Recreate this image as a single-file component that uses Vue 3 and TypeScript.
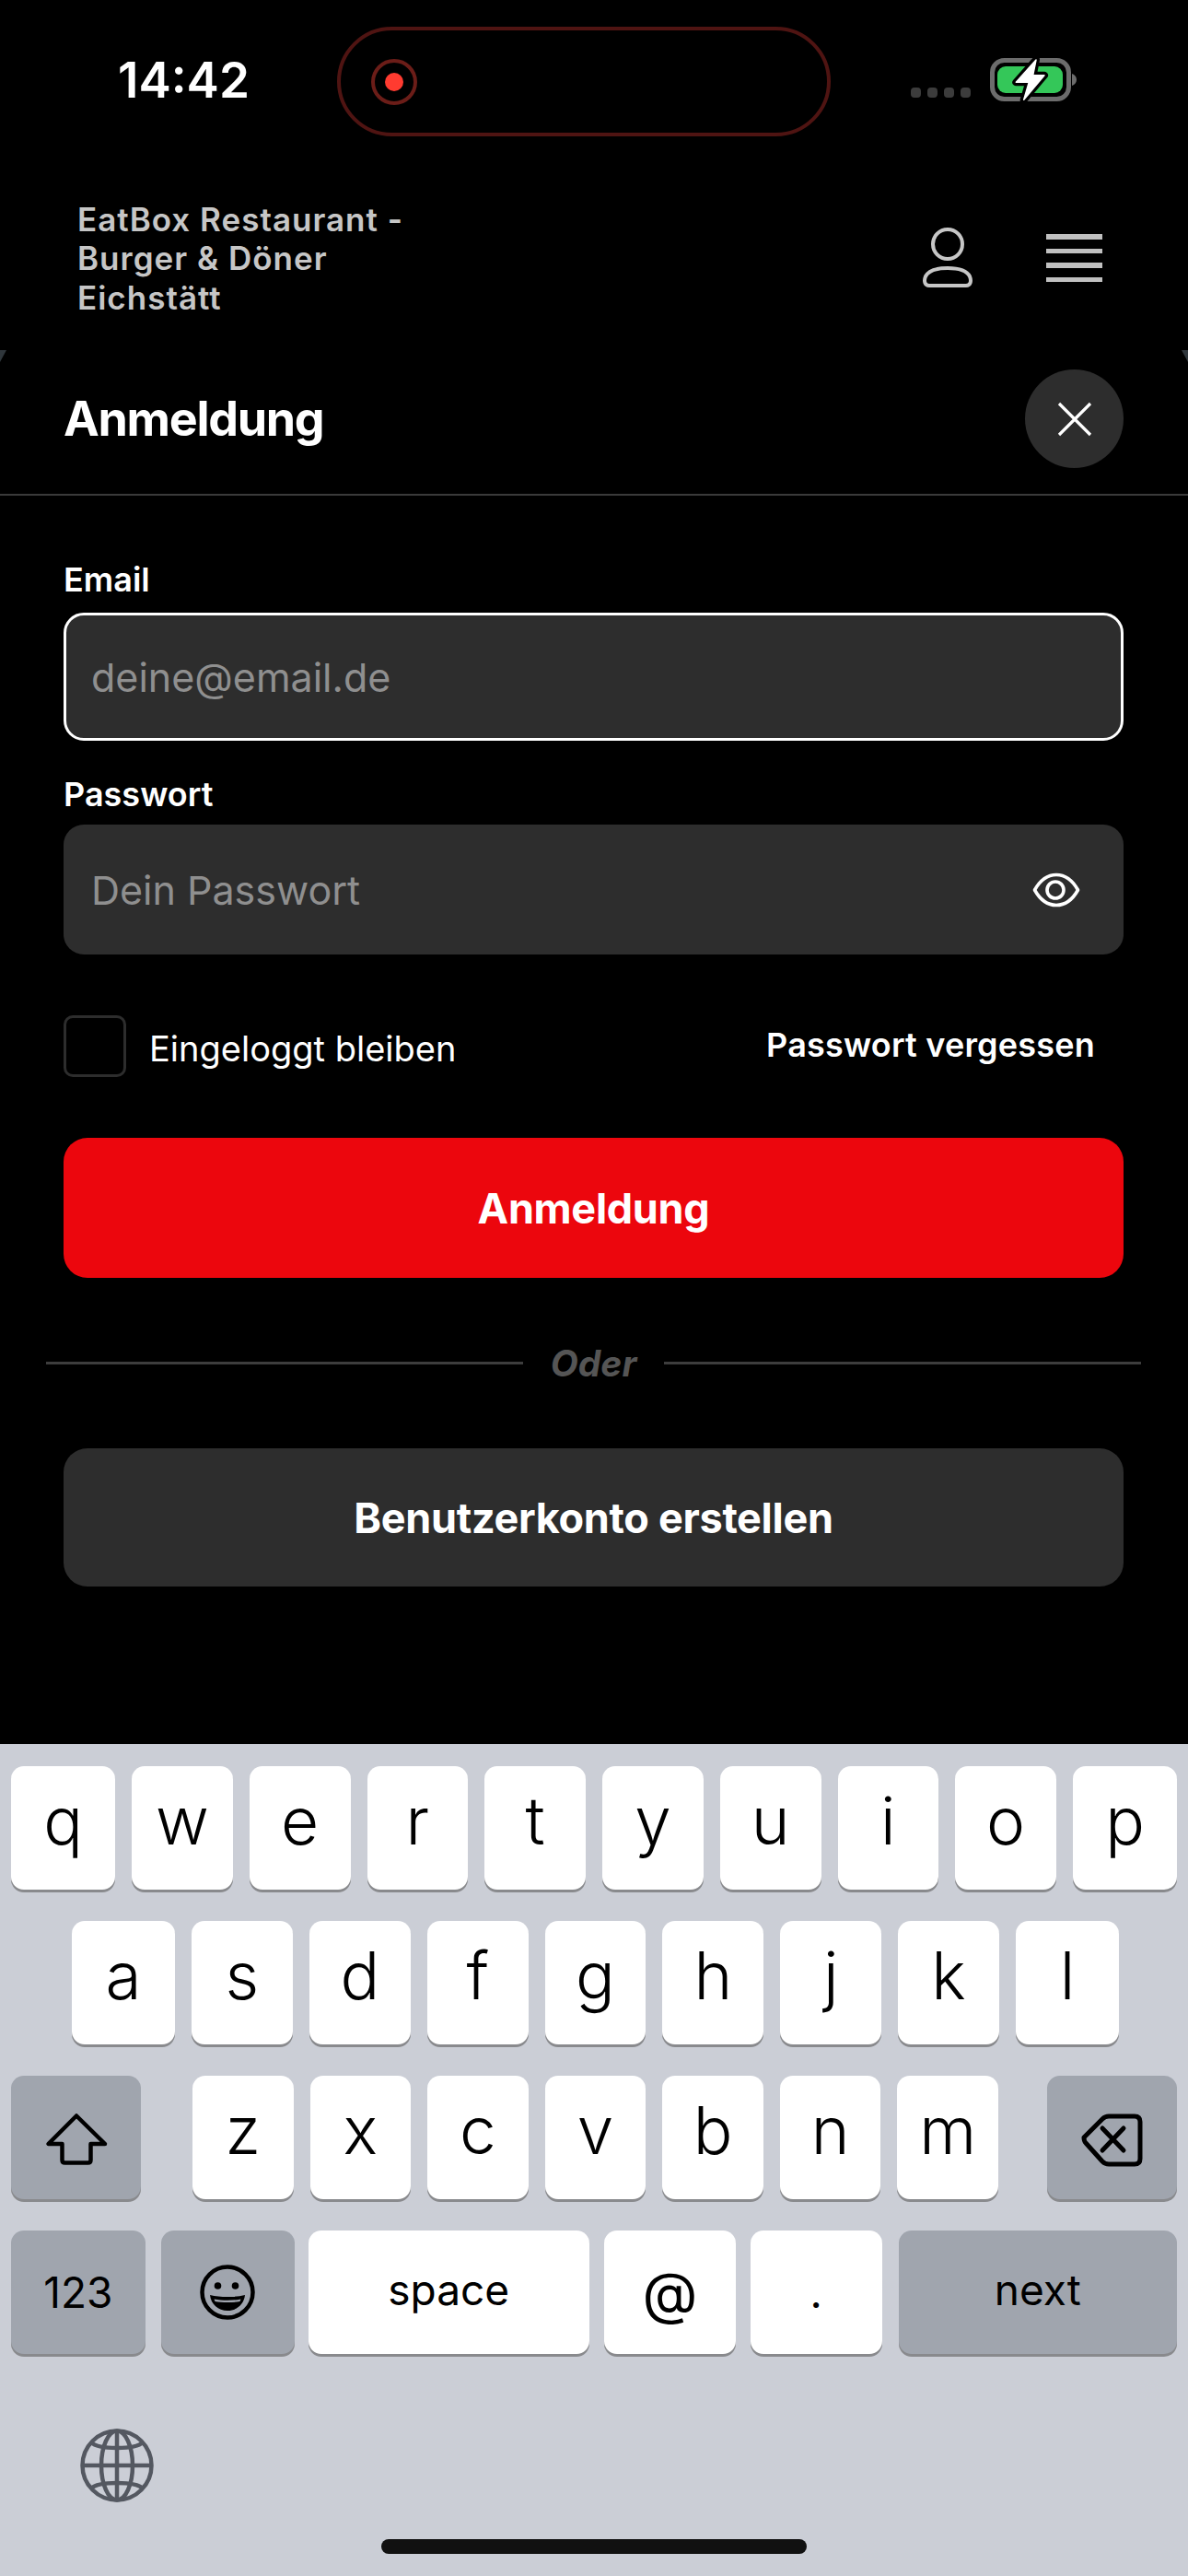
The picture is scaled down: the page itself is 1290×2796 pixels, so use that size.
<template>
  <div class="page">
    <div class="status">
      <span class="time">14:42</span>
      <div class="island">
        <span class="rec"><i></i></span>
      </div>
      <div class="signal">
        <i v-for="n in 4" :key="n"></i>
      </div>
      <svg class="battery" viewBox="0 0 105 54" width="105" height="54">
        <rect x="7.500" y="5.500" width="83" height="42" rx="13" fill="none" stroke="#6c6c6c" stroke-width="5" />
        <rect x="13" y="12" width="71" height="29" rx="9" fill="#34c759" />
        <path d="M94 20c3 1 5 3.500 5 6.500s-2 5.500-5 6.500z" fill="#6c6c6c" />
        <path d="M55 5 33.300 29.300H47.300L41.700 48.300 64 21.700H51.700z" fill="#000" stroke="#000" stroke-width="8" stroke-linejoin="round" />
        <path d="M55 5 33.300 29.300H47.300L41.700 48.300 64 21.700H51.700z" fill="#fff" stroke="#fff" stroke-width="1.500" stroke-linejoin="round" />
      </svg>
    </div>

    <header class="topbar">
      <div class="brand">EatBox Restaurant -<br />Burger &amp; Döner<br />Eichstätt</div>
      <svg class="user" viewBox="0 0 56 70" width="56" height="70">
        <circle cx="28" cy="20" r="16" fill="none" stroke="#c6c6c6" stroke-width="4" />
        <path d="M8 65c-5 0-6-5-4-10 3-6 12-9 24-9s21 3 24 9c2 5 1 10-4 10z" fill="none" stroke="#c6c6c6" stroke-width="4" stroke-linejoin="round" />
      </svg>
      <div class="burger">
        <i v-for="n in 4" :key="n"></i>
      </div>
    </header>

    <main class="sheet">
      <div class="sheet-head">
        <h1>Anmeldung</h1>
        <button class="close">
          <svg viewBox="0 0 38 38" width="38" height="38">
            <path d="M2 2 36 36M36 2 2 36" fill="none" stroke="#fff" stroke-width="3.200" />
          </svg>
        </button>
      </div>

      <form class="form" @submit.prevent>
        <label class="label first">Email</label>
        <input class="input active" type="text" placeholder="deine@email.de" />

        <label class="label second">Passwort</label>
        <div class="password">
          <input class="input" type="text" placeholder="Dein Passwort" />
          <svg class="eye" viewBox="0 0 52 38" width="52" height="38">
            <path d="M2.500 19C9 7.500 17 2.500 26 2.500S43 7.500 49.500 19C43 30.500 35 35.500 26 35.500S9 30.500 2.500 19z" fill="none" stroke="#fff" stroke-width="3.600" stroke-linejoin="round" />
            <circle cx="25" cy="19" r="9" fill="none" stroke="#fff" stroke-width="3.600" />
          </svg>
        </div>

        <div class="options">
          <span class="check"></span>
          <span class="stay">Eingeloggt bleiben</span>
          <a class="forgot">Passwort vergessen</a>
        </div>

        <button class="btn red">Anmeldung</button>

        <div class="divider"><i></i><span>Oder</span><i></i></div>

        <button class="btn dark">Benutzerkonto erstellen</button>
      </form>
    </main>

    <section class="keyboard">
      <div v-for="(row, r) in letterRows" :key="r" class="row" :class="'row-' + r">
        <svg v-if="r === 2" class="key gray wide" viewBox="0 0 141 134">
          <path d="M71 43.500 40.500 74H55.500V91.500C55.500 93.500 56.500 94.500 58.500 94.500H83.500C85.500 94.500 86.500 93.500 86.500 91.500V74H102z" fill="none" stroke="#000" stroke-width="4.500" stroke-linejoin="round" />
        </svg>
        <span v-if="r === 2" class="gap"></span>
        <span v-for="k in row" :key="k" class="key letter">{{ k }}</span>
        <span v-if="r === 2" class="gap right"></span>
        <svg v-if="r === 2" class="key gray wide" viewBox="0 0 141 134">
          <path d="M40 67 60 47C62 45 64 44 67 44H95C99 44 101 46 101 50V90C101 94 99 96 95 96H67C64 96 62 95 60 93L42 73C40 71 40 69 40 67z" fill="none" stroke="#000" stroke-width="5" stroke-linejoin="round" />
          <path d="M60 57 83 81M83 57 60 81" fill="none" stroke="#000" stroke-width="5" stroke-linecap="round" />
        </svg>
      </div>

      <div class="row bottom">
        <span class="key gray fn k123">123</span>
        <span class="key gray emoji">
          <svg viewBox="0 0 60 60" width="60" height="60">
            <circle cx="30" cy="30" r="27.500" fill="none" stroke="#000" stroke-width="4.500" />
            <circle cx="19.500" cy="23" r="3.800" />
            <circle cx="38.500" cy="23" r="3.800" />
            <path d="M11 33c6 1.500 12 2 19 2s13-.5 19-2c-1 10-9 17-19 17S12 43 11 33z" />
            <path d="M15.500 37.500c5 1 9.500 1.300 14.500 1.300s9.500-.3 14.500-1.300l-1 2.500c-4 .8-8.500 1-13.500 1s-9.500-.2-13.500-1z" fill="#a0a5ae" />
          </svg>
        </span>
        <span class="key fn space">space</span>
        <span class="key at">@</span>
        <span class="key dot">.</span>
        <span class="key gray fn next">next</span>
      </div>

      <svg class="globe" viewBox="0 0 80 80" width="80" height="80">
        <g fill="none" stroke="#545861" stroke-width="4.500">
          <circle cx="40" cy="40" r="37.500" />
          <ellipse cx="40" cy="40" rx="17" ry="37.500" />
          <path d="M40 2.500V77.500M2.500 40H77.500" />
          <path d="M12 15C20 23 60 23 68 15M12 65C20 57 60 57 68 65" />
        </g>
      </svg>
      <div class="home"></div>
    </section>
  </div>
</template>

<script setup lang="ts">
const letterRows: string[][] = [
  ["q", "w", "e", "r", "t", "y", "u", "i", "o", "p"],
  ["a", "s", "d", "f", "g", "h", "j", "k", "l"],
  ["z", "x", "c", "v", "b", "n", "m"],
];
</script>

<style>
html,
body {
  margin: 0;
  background: #000;
}
</style>

<style scoped>
.page {
  width: 1290px;
  height: 2796px;
  display: flex;
  flex-direction: column;
  background: #000;
  color: #fff;
  font-family: Inter, "Liberation Sans", sans-serif;
  overflow: hidden;
}

/* status bar */
.status {
  height: 178px;
  box-sizing: border-box;
  padding: 29px 0 0 128px;
  display: flex;
  align-items: flex-start;
}

.time {
  width: 238px;
  height: 119px;
  line-height: 117px;
  font-size: 53px;
  font-weight: 600;
}

.island {
  width: 536px;
  height: 119px;
  box-sizing: border-box;
  border: 4px solid #4f1412;
  border-radius: 60px;
  display: flex;
  align-items: center;
  padding-left: 33px;
}

.rec {
  width: 50px;
  height: 50px;
  box-sizing: border-box;
  border: 4px solid #6b1d18;
  border-radius: 50%;
  display: flex;
  align-items: center;
  justify-content: center;
}

.rec i {
  width: 20px;
  height: 20px;
  border-radius: 50%;
  background: #ff3b30;
}

.signal {
  display: flex;
  gap: 7px;
  margin: 66px 0 0 87px;
}

.signal i {
  width: 11px;
  height: 11px;
  border-radius: 4px;
  background: #3c3c3c;
}

.battery {
  margin: 31px 0 0 16px;
}

/* site header */
.topbar {
  height: 202px;
  display: flex;
  align-items: center;
  padding-left: 84px;
}

.brand {
  font-size: 35px;
  font-weight: 600;
  line-height: 42.500px;
  letter-spacing: 1px;
  color: #c6c6c6;
  margin-right: auto;
  margin-top: 3px;
}

.user {
  margin-top: 2px;
}

.burger {
  width: 61px;
  display: flex;
  flex-direction: column;
  gap: 10px;
  margin: 2px 93px 0 79px;
}

.burger i {
  height: 5.500px;
  background: #c0c0c0;
}

/* sheet */
.sheet {
  position: relative;
}

.sheet::before,
.sheet::after {
  content: "";
  position: absolute;
  top: 0;
  width: 7px;
  height: 13px;
  background: #2f363b;
}

.sheet::before {
  left: 0;
  clip-path: polygon(0 0, 100% 0, 0 100%);
}

.sheet::after {
  right: 0;
  clip-path: polygon(0 0, 100% 0, 100% 100%);
}

.sheet-head {
  height: 158px;
  box-sizing: border-box;
  padding: 21px 70px 0 69px;
  display: flex;
  align-items: flex-start;
  justify-content: space-between;
  border-bottom: 2px solid #3a3a3a;
}

h1 {
  margin: 0;
  font-size: 52px;
  font-weight: 700;
  line-height: 107px;
  letter-spacing: -1.300px;
}

.close {
  width: 107px;
  height: 107px;
  border: none;
  padding: 0;
  border-radius: 50%;
  background: #2d2d2d;
  display: flex;
  align-items: center;
  justify-content: center;
}

.form {
  display: flex;
  flex-direction: column;
  padding: 0 70px 0 69px;
}

.label {
  font-size: 36px;
  font-weight: 600;
  line-height: 44px;
}

.label.first {
  margin: 69px 0 14px;
}

.label.second {
  margin: 36px 0 11px;
}

.input {
  width: 100%;
  height: 139px;
  box-sizing: border-box;
  border: none;
  border-radius: 22px;
  background: #2d2d2d;
  padding: 0 30px;
  font-family: inherit;
  font-size: 43px;
  color: #fff;
  outline: none;
  display: block;
}

.input.active {
  border: 3px solid #fff;
  padding: 0 27px;
}

.input::placeholder {
  color: #8f8f8f;
  opacity: 1;
}

.password {
  position: relative;
}

.password .input {
  height: 141px;
}

.eye {
  position: absolute;
  right: 47px;
  top: 52px;
}

.options {
  margin-top: 66px;
  height: 67px;
  display: flex;
  align-items: center;
}

.check {
  width: 68px;
  height: 67px;
  box-sizing: border-box;
  border: 3px solid #2d2d2d;
  border-radius: 10px;
}

.stay {
  margin-left: 25px;
  font-size: 38px;
  margin-top: 5px;
}

.forgot {
  margin-left: auto;
  margin-right: 31px;
  font-size: 36px;
  font-weight: 600;
  letter-spacing: .2px;
  margin-top: -3px;
}

.btn {
  border: none;
  border-radius: 26px;
  color: #fff;
  font-family: inherit;
  font-size: 45px;
  font-weight: 700;
  letter-spacing: -.3px;
  padding: 0;
}

.btn.red {
  margin-top: 66px;
  height: 152px;
  background: #ec060d;
}

.btn.dark {
  margin-top: 71px;
  height: 150px;
  background: #2d2d2d;
}

.divider {
  margin: 70px -19px 0;
  height: 44px;
  display: flex;
  align-items: center;
  gap: 30px;
  color: #555;
  font-size: 39px;
  font-weight: 700;
  font-style: italic;
}

.divider i {
  flex: 1;
  height: 3px;
  background: #3d3d3d;
}

/* keyboard */
.keyboard {
  margin-top: auto;
  height: 903px;
  box-sizing: border-box;
  padding: 24px 12px 0;
  background: #cbced6;
  color: #000;
  display: flex;
  flex-direction: column;
}

.row {
  height: 134px;
  margin-bottom: 34px;
  display: flex;
  gap: 18px;
}

.row-0 .letter:first-child,
.row-0 .letter:last-child {
  flex: 0 0 113px;
}

.row-1 {
  padding: 0 63px 0 66px;
}

.row-1 .letter:first-child,
.row-1 .letter:last-child {
  flex: 0 0 112px;
}

.key {
  display: flex;
  align-items: center;
  justify-content: center;
  height: 134px;
  background: #fff;
  border-radius: 14px;
  box-shadow: 0 3px 0 #898a8d;
}

.letter {
  flex: 1;
  min-width: 0;
  font-size: 71px;
  font-weight: 300;
  line-height: 1;
  padding-bottom: 16px;
  box-sizing: border-box;
}

.gray {
  background: #a0a5ae;
}

.wide {
  width: 141px;
  flex: none;
}

.gap {
  width: 20px;
  flex: none;
}

.gap.right {
  width: 17px;
}

.fn {
  font-size: 46px;
}

.k123 {
  width: 146px;
}

.emoji {
  width: 145px;
  margin-left: -1px;
}

.space {
  width: 306px;
  margin-left: -3px;
  padding-bottom: 6px;
  box-sizing: border-box;
}

.at {
  width: 143px;
  margin-left: -2px;
  font-size: 62px;
}

.dot {
  width: 143px;
  margin-left: -2px;
  font-size: 46px;
}

.next {
  width: 303px;
  padding-bottom: 6px;
  box-sizing: border-box;
}

.globe {
  display: block;
  margin: 47px 0 0 75px;
}

.home {
  width: 462px;
  height: 16px;
  border-radius: 8px;
  background: #111;
  margin: 40px auto 0;
}
</style>
